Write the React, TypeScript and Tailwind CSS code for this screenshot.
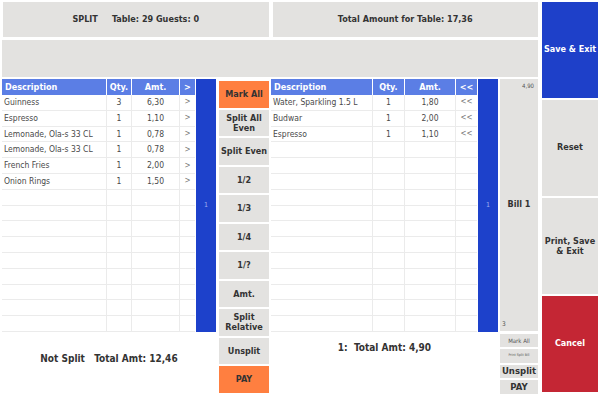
const leftItems = [
  ['Guinness', '3', '6,30'],
  ['Espresso', '1', '1,10'],
  ['Lemonade, Ola-s 33 CL', '1', '0,78'],
  ['Lemonade, Ola-s 33 CL', '1', '0,78'],
  ['French Fries', '1', '2,00'],
  ['Onion Rings', '1', '1,50'],
];

const rightItems = [
  ['Water, Sparkling 1.5 L', '1', '1,80'],
  ['Budwar', '1', '2,00'],
  ['Espresso', '1', '1,10'],
];

const splitButtons = [
  ['Mark All'],
  ['Split All', 'Even'],
  ['Split Even'],
  ['1/2'],
  ['1/3'],
  ['1/4'],
  ['1/?'],
  ['Amt.'],
  ['Split', 'Relative'],
  ['Unsplit'],
  ['PAY'],
];

type TableProps = {
  items: string[][];
  arrow: string;
  cols: string;
};

const ItemTable = ({ items, arrow, cols }: TableProps) => {
  const rows = Array.from({ length: 15 }, (_, i) => items[i] ?? ['', '', '']);
  return (
    <div className="flex flex-col h-[253px] flex-1">
      <div className={`grid ${cols} h-4 shrink-0 bg-[#5b7ee5] text-white font-bold text-[9px] leading-4`}>
        <div className="pl-[3px] border-r border-white">Description</div>
        <div className="text-center border-r border-white">Qty.</div>
        <div className="text-center border-r border-white">Amt.</div>
        <div className="text-center">{arrow}</div>
      </div>
      {rows.map((row, i) => (
        <div key={i} className={`grid ${cols} flex-1 border-b border-[#ebebeb] text-[8.5px] text-[#4a4a4a] items-center`}>
          <div className="pl-[2px] h-full flex items-center border-r border-[#ebebeb] whitespace-nowrap overflow-hidden">{row[0]}</div>
          <div className="h-full flex items-center justify-center border-r border-[#ebebeb]">{row[1]}</div>
          <div className="h-full flex items-center justify-center border-r border-[#ebebeb]">{row[2]}</div>
          <div className="h-full flex items-center justify-center text-[#777] text-[8px]">{row[0] ? arrow : ''}</div>
        </div>
      ))}
    </div>
  );
};

const BlueBar = () => (
  <div className="w-5 h-[253px] bg-[#1d41cb] flex items-center justify-center text-[7px] text-[#9fb2f0] shrink-0">
    1
  </div>
);

export default function App() {
  return (
    <div
      className="w-[600px] h-[394px] bg-white flex gap-1 pt-[2px] pl-[2px] text-[#333]"
      style={{ fontFamily: '"DejaVu Sans Condensed", "DejaVu Sans", Verdana, sans-serif' }}
    >
      <div className="w-[536px] flex flex-col">
        <div className="flex gap-1 h-[35px] pl-px">
          <div className="flex-1 bg-[#e3e2e0] flex items-center justify-center font-bold text-[9px] whitespace-pre">
            {'SPLIT     Table: 29 Guests: 0'}
          </div>
          <div className="flex-1 bg-[#e3e2e0] flex items-center justify-center font-bold text-[9px]">
            Total Amount for Table: 17,36
          </div>
        </div>
        <div className="h-[37px] mt-[3px] bg-[#e3e2e0]" />
        <div className="flex mt-[2px]">
          <div className="w-[214px] flex flex-col">
            <div className="flex gap-px">
              <ItemTable items={leftItems} arrow=">" cols="grid-cols-[105px_25px_48px_15px]" />
              <BlueBar />
            </div>
            <div className="flex-1 flex items-center justify-center font-bold text-[10px] whitespace-pre pb-[8px]">
              {'Not Split   Total Amt: 12,46'}
            </div>
          </div>
          <div className="w-[50px] ml-[3px] mr-[2px] flex flex-col gap-[2px] pt-[2px]">
            {splitButtons.map((lines, i) => (
              <div
                key={lines.join(' ')}
                className={`h-[26.5px] flex flex-col items-center justify-center text-center font-bold text-[9px] leading-[10px] whitespace-nowrap ${
                  i === 0 || i === 10 ? 'bg-[#ff7f40]' : 'bg-[#e3e2e0]'
                }`}
              >
                {lines.map(l => (
                  <span key={l}>{l}</span>
                ))}
              </div>
            ))}
          </div>
          <div className="w-[227px] flex flex-col">
            <div className="flex gap-px">
              <ItemTable items={rightItems} arrow="<<" cols="grid-cols-[102px_32px_51px_21px]" />
              <BlueBar />
            </div>
            <div className="flex-1 flex items-start justify-center font-bold text-[10px] whitespace-pre pt-[8px]">
              {'1:  Total Amt: 4,90'}
            </div>
          </div>
          <div className="w-[38px] ml-[2px] flex flex-col">
            <div className="h-[252px] bg-[#e3e2e0] flex flex-col relative">
              <div className="text-right text-[6px] pr-1 pt-[2px] text-[#555]">4,90</div>
              <div className="flex-1 flex items-center justify-center font-bold text-[9px]">Bill 1</div>
              <div className="text-[6.5px] pl-[2px] pb-[1px] text-[#555]">3</div>
            </div>
            <div className="flex flex-col gap-[2px] mt-[3px]">
              <div className="h-[13px] bg-[#e3e2e0] flex items-center justify-center text-[6px] text-[#555]">Mark All</div>
              <div className="h-[14px] bg-[#e3e2e0] flex items-center justify-center text-[3.5px] text-[#555] whitespace-nowrap">Print Split Bill</div>
              <div className="h-[13px] bg-[#e3e2e0] flex items-center justify-center font-bold text-[9.5px]">Unsplit</div>
              <div className="h-[13.5px] bg-[#e3e2e0] flex items-center justify-center font-bold text-[9.5px]">PAY</div>
            </div>
          </div>
        </div>
      </div>
      <div className="w-[56px] flex flex-col gap-[2px]">
        <div className="h-[96px] bg-[#1e40c9] text-white font-bold text-[9px] flex items-center justify-center text-center">
          Save &amp; Exit
        </div>
        <div className="h-[96px] bg-[#e3e2e0] font-bold text-[9px] flex items-center justify-center text-center">
          Reset
        </div>
        <div className="h-[96px] bg-[#e3e2e0] font-bold text-[9px] leading-[10px] flex flex-col items-center justify-center text-center">
          <span>Print, Save</span>
          <span>&amp; Exit</span>
        </div>
        <div className="h-[96px] bg-[#c42634] text-white font-bold text-[9px] flex items-center justify-center text-center">
          Cancel
        </div>
      </div>
    </div>
  );
}
